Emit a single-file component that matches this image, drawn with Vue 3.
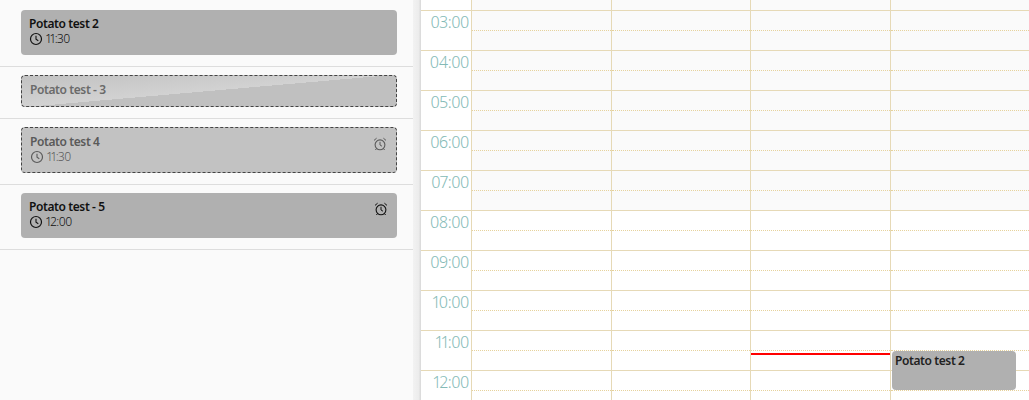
<template>
  <div class="page">
    <aside class="sidebar">
      <div
        v-for="item in items"
        :key="item.title"
        class="item"
        :class="{ first: item.first }"
      >
        <div class="card" :class="{ ghost: item.ghost, placeholder: item.placeholder }">
          <div class="card-title">{{ item.title }}</div>
          <div v-if="item.time" class="card-time">
            <svg class="clock" viewBox="0 0 14 14" width="14" height="14">
              <circle cx="7" cy="7" r="5.5" fill="none" stroke="currentColor" stroke-width="1.2" />
              <path d="M7 3.8V7.3L9.3 8.8" fill="none" stroke="currentColor" stroke-width="1.1" />
            </svg>
            <span>{{ item.time }}</span>
          </div>
          <svg v-if="item.alarm" class="alarm" viewBox="0 0 14 14" width="14" height="14">
            <circle cx="7" cy="7.8" r="4.9" fill="none" stroke="currentColor" stroke-width="1.1" />
            <path d="M7 4.8V8L9 9.2M1 3.4L3.6 1.2M13 3.4L10.4 1.2M3.5 11.6L2.4 13M10.5 11.6L11.6 13" fill="none" stroke="currentColor" stroke-width="1" />
          </svg>
        </div>
      </div>
    </aside>
    <div class="divider"></div>
    <main class="schedule">
      <div class="stub">
        <div class="time"></div>
        <div v-for="d in 4" :key="d" class="day off"></div>
      </div>
      <div v-for="hour in hours" :key="hour.label" class="row">
        <div class="time">{{ hour.label }}</div>
        <div v-for="d in 4" :key="d" class="day" :class="{ off: hour.off }"></div>
      </div>
      <div class="now"></div>
      <div class="event">Potato test 2</div>
    </main>
  </div>
</template>

<script setup>
const items = [
  { title: 'Potato test 2', time: '11:30', first: true },
  { title: 'Potato test - 3', ghost: true, placeholder: true },
  { title: 'Potato test 4', time: '11:30', ghost: true, alarm: true },
  { title: 'Potato test - 5', time: '12:00', alarm: true }
]

const hours = [
  { label: '03:00', off: true },
  { label: '04:00', off: true },
  { label: '05:00', off: true },
  { label: '06:00', off: true },
  { label: '07:00', off: true },
  { label: '08:00' },
  { label: '09:00' },
  { label: '10:00' },
  { label: '11:00' },
  { label: '12:00' }
]
</script>

<style>
html, body {
  margin: 0;
  overflow: hidden;
}
</style>

<style scoped>
.page {
  display: flex;
  height: 400px;
  width: 1029px;
  overflow: hidden;
  background: #fff;
  font-family: 'Noto Sans', 'Open Sans', sans-serif;
}

.sidebar {
  width: 413px;
  flex-shrink: 0;
  background: #fafafa;
}

.item {
  padding: 8px 16px 11px 21px;
  border-bottom: 1px solid #ddd;
}

.item.first {
  padding-top: 10px;
}

.card {
  position: relative;
  box-sizing: border-box;
  padding: 6px 8px 9px;
  border-radius: 4px;
  background: #b0b0b0;
  color: #111;
}

.card.ghost {
  padding: 6px 8px 8px;
  border: 1px dashed #444;
  background: #c2c2c2;
  color: #5a5a5a;
}

.card.placeholder {
  background: linear-gradient(175deg, #c2c2c2 0%, #d2d2d2 50%, #c0c0c0 50%, #c0c0c0 100%);
  color: #6a6a6a;
}

.card-title {
  font-size: 12px;
  line-height: 16px;
  font-weight: 600;
  letter-spacing: -0.4px;
}

.card-time {
  display: flex;
  align-items: center;
  gap: 3px;
  font-size: 12px;
  line-height: 14px;
  font-weight: 300;
  letter-spacing: -0.5px;
  font-variant-numeric: proportional-nums;
}

.clock {
  flex-shrink: 0;
}

.alarm {
  position: absolute;
  top: 9px;
  right: 9px;
}

.divider {
  width: 8px;
  flex-shrink: 0;
  background: linear-gradient(90deg, #f2f2f2, #ececec 70%, #d8d8d8);
}

.schedule {
  position: relative;
  flex: 1;
  min-width: 0;
}

.stub {
  display: flex;
  height: 10px;
}

.row {
  display: flex;
  height: 40px;
  box-sizing: border-box;
  border-top: 1px solid #e6d9b6;
}

.time {
  width: 50px;
  flex-shrink: 0;
  box-sizing: border-box;
  padding: 1px 2px 0 0;
  text-align: right;
  font-size: 16px;
  line-height: 20px;
  font-weight: 300;
  letter-spacing: -0.4px;
  font-variant-numeric: proportional-nums;
  color: #84bab6;
}

.day {
  flex: 1;
  box-sizing: border-box;
  border-left: 1px solid #e6d9b6;
  position: relative;
}

.row .day::after {
  content: '';
  position: absolute;
  left: 0;
  right: 0;
  top: 19px;
  border-top: 1px dotted #e6d29c;
}

.day.off {
  background: #fafafa;
}

.now {
  position: absolute;
  left: 330px;
  top: 353px;
  width: 139px;
  height: 2px;
  background: #f00;
}

.event {
  position: absolute;
  left: 471px;
  top: 351px;
  width: 124px;
  height: 39px;
  box-sizing: border-box;
  padding: 2px 3px;
  border-radius: 4px;
  background: #b0b0b0;
  color: #222;
  font-size: 12px;
  line-height: 16px;
  font-weight: 600;
  letter-spacing: -0.4px;
}
</style>
